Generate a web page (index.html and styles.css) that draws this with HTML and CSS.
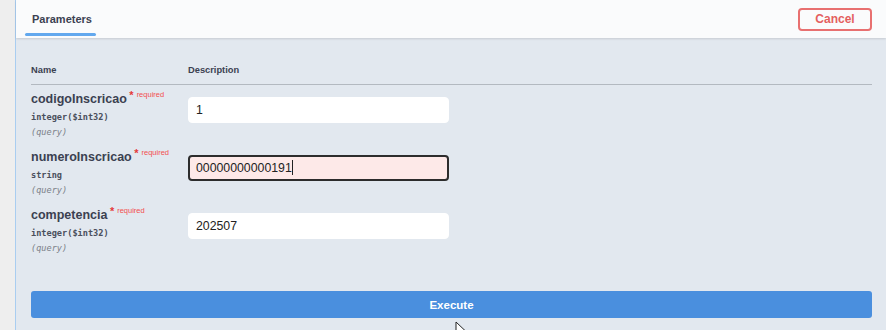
FILE: index.html
```html
<!DOCTYPE html>
<html>
<head>
<meta charset="utf-8">
<link rel="stylesheet" href="styles.css">
</head>
<body>
<div class="strip"></div>
<div class="panel">
  <div class="panel-head">
    <div class="tab">Parameters</div>
    <button class="cancel">Cancel</button>
  </div>
  <div class="panel-body">
    <div class="thead">
      <div class="col-name">Name</div>
      <div class="col-desc">Description</div>
    </div>
    <div class="prow">
      <div class="pname">
        <div class="ptitle">codigoInscricao <span class="star">*</span><span class="req">required</span></div>
        <div class="ptype">integer($int32)</div>
        <div class="pin">(query)</div>
      </div>
      <div class="pdesc"><input class="field" value="1"></div>
    </div>
    <div class="prow">
      <div class="pname">
        <div class="ptitle">numeroInscricao <span class="star">*</span><span class="req">required</span></div>
        <div class="ptype">string</div>
        <div class="pin">(query)</div>
      </div>
      <div class="pdesc"><div class="field invalid">00000000000191<span class="caret"></span></div></div>
    </div>
    <div class="prow">
      <div class="pname">
        <div class="ptitle">competencia <span class="star">*</span><span class="req">required</span></div>
        <div class="ptype">integer($int32)</div>
        <div class="pin">(query)</div>
      </div>
      <div class="pdesc"><input class="field" value="202507"></div>
    </div>
    <button class="execute">Execute</button>
  </div>
</div>
<svg class="cursor" width="12" height="18" viewBox="0 0 12 18"><path d="M1 1 L1 14 L4 11 L6.5 16.5 L8.5 15.5 L6 10 L10.5 10 Z" fill="#ffffff" stroke="#222" stroke-width="1"/></svg>
</body>
</html>
```
FILE: styles.css
```css
* { box-sizing: border-box; }
html, body { margin: 0; padding: 0; }
body {
  width: 886px;
  height: 330px;
  overflow: hidden;
  display: flex;
  font-family: "Liberation Sans", Arial, sans-serif;
  color: #3b4151;
  background: #eeeeee;
  position: relative;
}
.strip { width: 15px; flex: none; background: #eeeeee; }
.panel {
  flex: 1;
  border-left: 1px solid #a9cdf0;
  background: #e2e8ef;
  display: flex;
  flex-direction: column;
}
.panel-head {
  height: 38px;
  background: #fafbfc;
  box-shadow: 0 1px 2px rgba(0,0,0,0.12);
  display: flex;
  align-items: center;
  justify-content: space-between;
  padding: 0 14px 0 9px;
  position: relative;
}
.tab {
  font-size: 11px;
  font-weight: bold;
  height: 38px;
  line-height: 38px;
  padding: 0 7px;
  width: 71px;
  position: relative;
}
.tab::after {
  content: "";
  position: absolute;
  left: 0; right: 0; bottom: 2px;
  height: 3px;
  border-radius: 2px;
  background: #62a8ee;
}
.cancel {
  width: 74px;
  height: 23px;
  border: 2px solid #e87070;
  border-radius: 4px;
  background: transparent;
  color: #e45f5f;
  font-family: "Liberation Sans", Arial, sans-serif;
  font-weight: bold;
  font-size: 12px;
  padding: 0;
}
.panel-body { padding: 0 14px 0 15px; }
.thead {
  display: flex;
  height: 47px;
  padding-top: 25px;
  border-bottom: 1px solid #b3b9c0;
  font-size: 9.3px;
  font-weight: bold;
  line-height: 14px;
}
.col-name { width: 157px; }
.prow { display: flex; height: 58px; }
.pname { width: 157px; padding-top: 5px; }
.ptitle { font-size: 12.5px; font-weight: bold; line-height: 18px; white-space: nowrap; }
.star { color: #e43a3a; font-size: 11px; position: relative; top: -4px; margin-left: -1px; }
.req { color: #f25050; font-size: 7.5px; font-weight: normal; position: relative; top: -6px; margin-left: 3px; }
.ptype { font-family: "DejaVu Sans Mono", monospace; font-size: 8.6px; font-weight: bold; line-height: 15px; color: #4a4f5c; }
.pin { font-family: "DejaVu Sans Mono", monospace; font-size: 8.6px; font-style: italic; line-height: 15px; color: #7b7f88; }
.pdesc { padding-top: 12px; }
.field {
  display: block;
  width: 261px;
  height: 26px;
  border: 1px solid #ffffff;
  border-radius: 4px;
  background: #ffffff;
  font-family: "Liberation Sans", Arial, sans-serif;
  font-size: 12.3px;
  color: #222;
  padding: 0 7px;
  line-height: 24px;
  outline: none;
}
.field.invalid {
  background: #fde9e8;
  border: 2px solid #2c2c2c;
  padding: 0 6px;
  line-height: 23px;
}
.caret {
  display: inline-block;
  width: 1px;
  height: 15px;
  background: #222;
  vertical-align: -3px;
}
.execute {
  display: block;
  width: 100%;
  height: 27px;
  margin-top: 32px;
  border: none;
  border-radius: 3px;
  background: #4a8fde;
  color: #ffffff;
  font-family: "Liberation Sans", Arial, sans-serif;
  font-weight: bold;
  font-size: 11.5px;
  padding: 0;
}
.cursor { position: absolute; left: 455px; top: 321px; }
```
